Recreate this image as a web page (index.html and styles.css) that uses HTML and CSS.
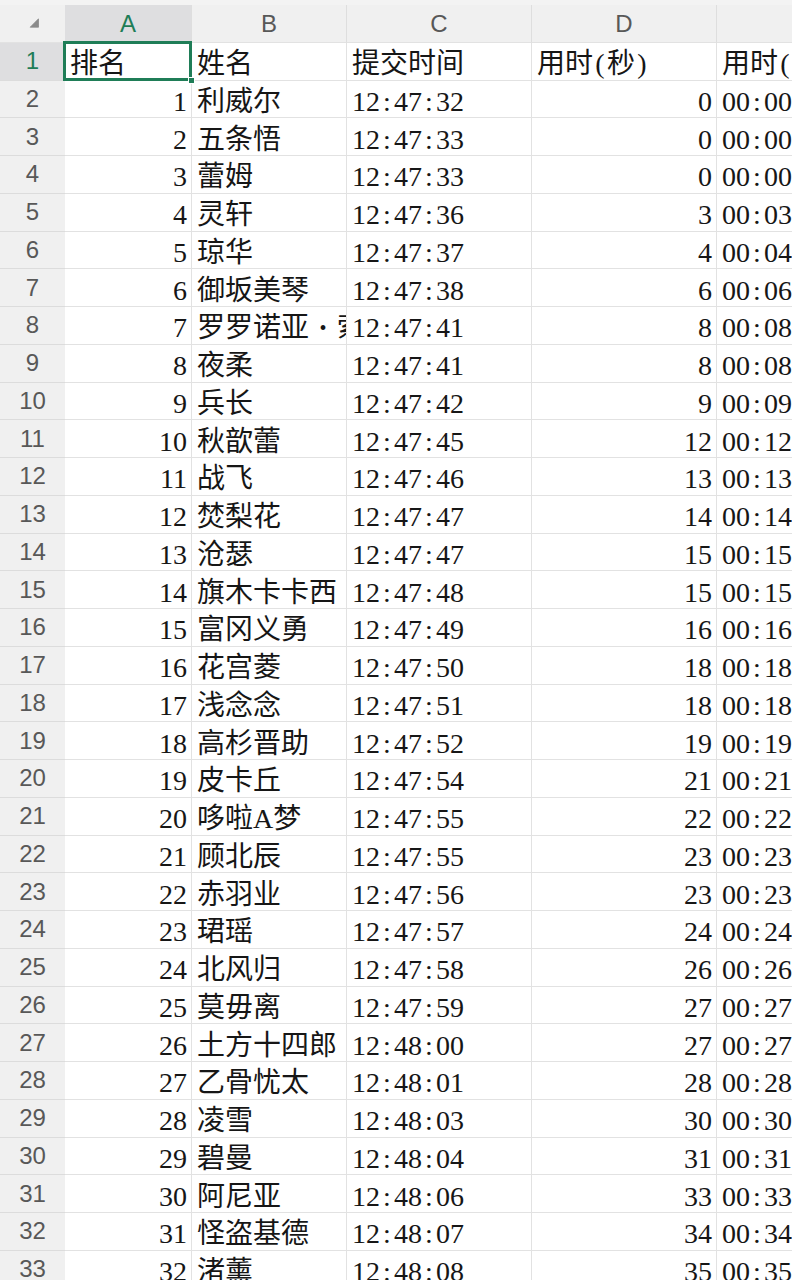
FILE: index.html
```html
<!DOCTYPE html>
<html lang="zh-CN">
<head>
<meta charset="utf-8">
<title>排名表</title>
<link rel="stylesheet" href="styles.css">
</head>
<body>
<div class="sheet">
  <div class="corner"><svg width="10" height="10" viewBox="0 0 10 10"><path d="M9.5 0.8 V9.2 H1.2 Z" fill="#8a8a8a" stroke="#8a8a8a" stroke-width="0.8" stroke-linejoin="round"/></svg></div>
  <div class="ch sel">A</div><div class="ch">B</div><div class="ch">C</div><div class="ch">D</div><div class="ch">E</div>

  <div class="rh sel">1</div><div class="cell active">排名</div><div class="cell">姓名</div><div class="cell">提交时间</div><div class="cell">用时<span class="c">(</span>秒<span class="c">)</span></div><div class="cell">用时<span class="c">(</span>分<span class="c">:</span>秒<span class="c">)</span></div>
  <div class="rh">2</div><div class="cell num">1</div><div class="cell">利威尔</div><div class="cell">12<span class="c">:</span>47<span class="c">:</span>32</div><div class="cell num">0</div><div class="cell">00<span class="c">:</span>00</div>
  <div class="rh">3</div><div class="cell num">2</div><div class="cell">五条悟</div><div class="cell">12<span class="c">:</span>47<span class="c">:</span>33</div><div class="cell num">0</div><div class="cell">00<span class="c">:</span>00</div>
  <div class="rh">4</div><div class="cell num">3</div><div class="cell">蕾姆</div><div class="cell">12<span class="c">:</span>47<span class="c">:</span>33</div><div class="cell num">0</div><div class="cell">00<span class="c">:</span>00</div>
  <div class="rh">5</div><div class="cell num">4</div><div class="cell">灵轩</div><div class="cell">12<span class="c">:</span>47<span class="c">:</span>36</div><div class="cell num">3</div><div class="cell">00<span class="c">:</span>03</div>
  <div class="rh">6</div><div class="cell num">5</div><div class="cell">琼华</div><div class="cell">12<span class="c">:</span>47<span class="c">:</span>37</div><div class="cell num">4</div><div class="cell">00<span class="c">:</span>04</div>
  <div class="rh">7</div><div class="cell num">6</div><div class="cell">御坂美琴</div><div class="cell">12<span class="c">:</span>47<span class="c">:</span>38</div><div class="cell num">6</div><div class="cell">00<span class="c">:</span>06</div>
  <div class="rh">8</div><div class="cell num">7</div><div class="cell">罗罗诺亚<span class="dot">•</span>索隆</div><div class="cell">12<span class="c">:</span>47<span class="c">:</span>41</div><div class="cell num">8</div><div class="cell">00<span class="c">:</span>08</div>
  <div class="rh">9</div><div class="cell num">8</div><div class="cell">夜柔</div><div class="cell">12<span class="c">:</span>47<span class="c">:</span>41</div><div class="cell num">8</div><div class="cell">00<span class="c">:</span>08</div>
  <div class="rh">10</div><div class="cell num">9</div><div class="cell">兵长</div><div class="cell">12<span class="c">:</span>47<span class="c">:</span>42</div><div class="cell num">9</div><div class="cell">00<span class="c">:</span>09</div>
  <div class="rh">11</div><div class="cell num">10</div><div class="cell">秋歆蕾</div><div class="cell">12<span class="c">:</span>47<span class="c">:</span>45</div><div class="cell num">12</div><div class="cell">00<span class="c">:</span>12</div>
  <div class="rh">12</div><div class="cell num">11</div><div class="cell">战飞</div><div class="cell">12<span class="c">:</span>47<span class="c">:</span>46</div><div class="cell num">13</div><div class="cell">00<span class="c">:</span>13</div>
  <div class="rh">13</div><div class="cell num">12</div><div class="cell">焚梨花</div><div class="cell">12<span class="c">:</span>47<span class="c">:</span>47</div><div class="cell num">14</div><div class="cell">00<span class="c">:</span>14</div>
  <div class="rh">14</div><div class="cell num">13</div><div class="cell">沧瑟</div><div class="cell">12<span class="c">:</span>47<span class="c">:</span>47</div><div class="cell num">15</div><div class="cell">00<span class="c">:</span>15</div>
  <div class="rh">15</div><div class="cell num">14</div><div class="cell">旗木卡卡西</div><div class="cell">12<span class="c">:</span>47<span class="c">:</span>48</div><div class="cell num">15</div><div class="cell">00<span class="c">:</span>15</div>
  <div class="rh">16</div><div class="cell num">15</div><div class="cell">富冈义勇</div><div class="cell">12<span class="c">:</span>47<span class="c">:</span>49</div><div class="cell num">16</div><div class="cell">00<span class="c">:</span>16</div>
  <div class="rh">17</div><div class="cell num">16</div><div class="cell">花宫菱</div><div class="cell">12<span class="c">:</span>47<span class="c">:</span>50</div><div class="cell num">18</div><div class="cell">00<span class="c">:</span>18</div>
  <div class="rh">18</div><div class="cell num">17</div><div class="cell">浅念念</div><div class="cell">12<span class="c">:</span>47<span class="c">:</span>51</div><div class="cell num">18</div><div class="cell">00<span class="c">:</span>18</div>
  <div class="rh">19</div><div class="cell num">18</div><div class="cell">高杉晋助</div><div class="cell">12<span class="c">:</span>47<span class="c">:</span>52</div><div class="cell num">19</div><div class="cell">00<span class="c">:</span>19</div>
  <div class="rh">20</div><div class="cell num">19</div><div class="cell">皮卡丘</div><div class="cell">12<span class="c">:</span>47<span class="c">:</span>54</div><div class="cell num">21</div><div class="cell">00<span class="c">:</span>21</div>
  <div class="rh">21</div><div class="cell num">20</div><div class="cell">哆啦A梦</div><div class="cell">12<span class="c">:</span>47<span class="c">:</span>55</div><div class="cell num">22</div><div class="cell">00<span class="c">:</span>22</div>
  <div class="rh">22</div><div class="cell num">21</div><div class="cell">顾北辰</div><div class="cell">12<span class="c">:</span>47<span class="c">:</span>55</div><div class="cell num">23</div><div class="cell">00<span class="c">:</span>23</div>
  <div class="rh">23</div><div class="cell num">22</div><div class="cell">赤羽业</div><div class="cell">12<span class="c">:</span>47<span class="c">:</span>56</div><div class="cell num">23</div><div class="cell">00<span class="c">:</span>23</div>
  <div class="rh">24</div><div class="cell num">23</div><div class="cell">珺瑶</div><div class="cell">12<span class="c">:</span>47<span class="c">:</span>57</div><div class="cell num">24</div><div class="cell">00<span class="c">:</span>24</div>
  <div class="rh">25</div><div class="cell num">24</div><div class="cell">北风归</div><div class="cell">12<span class="c">:</span>47<span class="c">:</span>58</div><div class="cell num">26</div><div class="cell">00<span class="c">:</span>26</div>
  <div class="rh">26</div><div class="cell num">25</div><div class="cell">莫毋离</div><div class="cell">12<span class="c">:</span>47<span class="c">:</span>59</div><div class="cell num">27</div><div class="cell">00<span class="c">:</span>27</div>
  <div class="rh">27</div><div class="cell num">26</div><div class="cell">土方十四郎</div><div class="cell">12<span class="c">:</span>48<span class="c">:</span>00</div><div class="cell num">27</div><div class="cell">00<span class="c">:</span>27</div>
  <div class="rh">28</div><div class="cell num">27</div><div class="cell">乙骨忧太</div><div class="cell">12<span class="c">:</span>48<span class="c">:</span>01</div><div class="cell num">28</div><div class="cell">00<span class="c">:</span>28</div>
  <div class="rh">29</div><div class="cell num">28</div><div class="cell">凌雪</div><div class="cell">12<span class="c">:</span>48<span class="c">:</span>03</div><div class="cell num">30</div><div class="cell">00<span class="c">:</span>30</div>
  <div class="rh">30</div><div class="cell num">29</div><div class="cell">碧曼</div><div class="cell">12<span class="c">:</span>48<span class="c">:</span>04</div><div class="cell num">31</div><div class="cell">00<span class="c">:</span>31</div>
  <div class="rh">31</div><div class="cell num">30</div><div class="cell">阿尼亚</div><div class="cell">12<span class="c">:</span>48<span class="c">:</span>06</div><div class="cell num">33</div><div class="cell">00<span class="c">:</span>33</div>
  <div class="rh">32</div><div class="cell num">31</div><div class="cell">怪盗基德</div><div class="cell">12<span class="c">:</span>48<span class="c">:</span>07</div><div class="cell num">34</div><div class="cell">00<span class="c">:</span>34</div>
  <div class="rh">33</div><div class="cell num">32</div><div class="cell">渚薰</div><div class="cell">12<span class="c">:</span>48<span class="c">:</span>08</div><div class="cell num">35</div><div class="cell">00<span class="c">:</span>35</div>
</div>
</body>
</html>
```

FILE: styles.css
```css
html, body {
  margin: 0;
  padding: 0;
  overflow: hidden;
  background: #f3f3f3;
}

.sheet {
  display: grid;
  grid-template-columns: 65px 127px 155px 185px 185px 185px;
  grid-auto-rows: 37.75px;
  width: 902px;
  padding-top: 5px;
}

.corner {
  background: #f0f0f0;
  display: flex;
  align-items: center;
  justify-content: center;
  padding: 0 0 0 2px;
  border-bottom: 1px solid #e2e2e2;
  box-sizing: border-box;
}

.ch {
  background: #f0f0f0;
  border-right: 1px solid #dedede;
  border-bottom: 1px solid #e2e2e2;
  box-sizing: border-box;
  display: flex;
  align-items: center;
  justify-content: center;
  padding-top: 2px;
  font-family: "Liberation Sans", Arial, sans-serif;
  font-size: 24px;
  color: #585858;
}

.rh {
  background: #f0f0f0;
  border-bottom: 1px solid #dcdcdc;
  box-sizing: border-box;
  display: flex;
  align-items: center;
  justify-content: center;
  font-family: "Liberation Sans", Arial, sans-serif;
  font-size: 24px;
  color: #585858;
}

.ch.sel, .rh.sel {
  background: #dedee0;
  color: #1f7d57;
}

.cell {
  background: #ffffff;
  border-right: 1px solid #e2e2e2;
  border-bottom: 1px solid #e2e2e2;
  box-sizing: border-box;
  display: flex;
  align-items: center;
  padding: 6px 0 0 5px;
  font-family: "Liberation Serif", "Noto Sans CJK SC", serif;
  font-size: 28px;
  line-height: 1;
  color: #161616;
  white-space: nowrap;
  overflow: hidden;
}

.cell.num {
  justify-content: flex-end;
  padding: 6px 4px 0 0;
}

.c {
  display: inline-block;
  width: 14px;
  text-align: center;
}

.dot {
  display: inline-block;
  flex: none;
  width: 28px;
  font-size: 20px;
  text-align: center;
}

.cell.active {
  position: relative;
  overflow: visible;
  z-index: 2;
}

.cell.active::after {
  content: "";
  position: absolute;
  left: -2px;
  top: -2px;
  right: -1px;
  bottom: -1px;
  border: 3px solid #1f7d57;
}

.cell.active::before {
  content: "";
  position: absolute;
  right: -4px;
  bottom: -4px;
  width: 5px;
  height: 5px;
  background: #1f7d57;
  border: 1px solid #ffffff;
  z-index: 3;
}
```
